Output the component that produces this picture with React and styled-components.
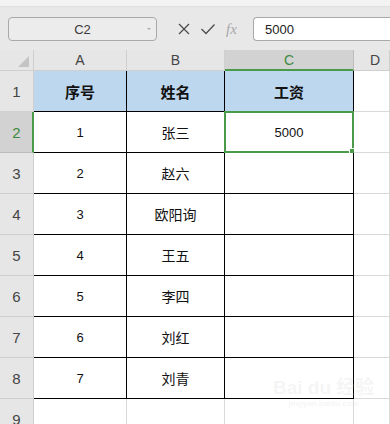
import React from "react";
import styled, { createGlobalStyle } from "styled-components";

const Global = createGlobalStyle`
  html, body { margin: 0; padding: 0; background: #ffffff; }
  body { font-family: "Liberation Sans", "Noto Sans CJK SC", sans-serif; overflow: hidden; }
  * { box-sizing: border-box; }
`;

const Page = styled.div`
  width: 390px;
  height: 424px;
  overflow: hidden;
  position: relative;
  background: #fff;
`;

const TopStrip = styled.div`
  height: 7px;
  background: #f3f3f3;
  border-bottom: 1px solid #e0e0e0;
`;

const FormulaBar = styled.div`
  height: 43px;
  background: #e8e8e8;
  display: flex;
  align-items: flex-start;
  padding: 10px 0 0 8px;
`;

const NameBox = styled.div`
  width: 149px;
  height: 24px;
  border: 1px solid #a9a9a9;
  border-radius: 4px;
  background: #ececec;
  display: flex;
  align-items: center;
  justify-content: center;
  position: relative;
  font-size: 13px;
  color: #3a3a3a;
`;

const Caret = styled.span`
  position: absolute;
  right: 5px;
  top: 10px;
  width: 0;
  height: 0;
  border-left: 2px solid transparent;
  border-right: 2px solid transparent;
  border-top: 2px solid #aaa;
`;

const Icons = styled.div`
  display: flex;
  align-items: center;
  height: 24px;
  gap: 9px;
  padding-left: 20px;
  width: 96px;
`;

const Fx = styled.span`
  font-family: "Liberation Serif", serif;
  font-style: italic;
  font-size: 15px;
  color: #a8a8a8;
  margin-left: 1px;
`;

const FormulaInput = styled.div`
  flex: 1;
  height: 24px;
  border: 1px solid #a9a9a9;
  border-right: none;
  border-radius: 4px 0 0 4px;
  background: #fff;
  display: flex;
  align-items: center;
  padding-left: 11px;
  font-size: 13px;
  color: #222;
`;

const Grid = styled.div`
  display: grid;
  grid-template-columns: 34px 93px 98px 129px 1fr;
  grid-template-rows: 21px repeat(9, 41px);
`;

const Corner = styled.div`
  background: #e6e6e6;
  border-right: 1px solid #cfcfcf;
  border-bottom: 1px solid #cfcfcf;
  position: relative;
`;

const Tri = styled.span`
  position: absolute;
  right: 4px;
  bottom: 3px;
  width: 0;
  height: 0;
  border-left: 11px solid transparent;
  border-bottom: 11px solid #c4c4c4;
`;

const ColHead = styled.div`
  background: ${(p) => (p.$sel ? "#d2d2d2" : "#e6e6e6")};
  color: ${(p) => (p.$sel ? "#3e8a3e" : "#444")};
  border-right: 1px solid ${(p) => (p.$sel ? "#bcbcbc" : "#cfcfcf")};
  border-bottom: ${(p) => (p.$sel ? "2px solid #4a9a4a" : "1px solid #cfcfcf")};
  display: flex;
  align-items: center;
  justify-content: ${(p) => (p.$left ? "flex-start" : "center")};
  padding-left: ${(p) => (p.$left ? "16px" : "0")};
  font-size: 14px;
`;

const RowHead = styled.div`
  background: ${(p) => (p.$sel ? "#d2d2d2" : "#e6e6e6")};
  color: ${(p) => (p.$sel ? "#3e8a3e" : "#444")};
  border-right: ${(p) => (p.$sel ? "2px solid #4a9a4a" : "1px solid #cfcfcf")};
  border-bottom: 1px solid ${(p) => (p.$sel ? "#bcbcbc" : "#cfcfcf")};
  display: flex;
  align-items: center;
  justify-content: center;
  font-size: 15px;
  padding-left: ${(p) => (p.$sel ? "1px" : "0")};
`;

const Cell = styled.div`
  position: relative;
  background: ${(p) => (p.$head ? "#bdd7ee" : "#fff")};
  border-right: 1px solid ${(p) => (p.$table ? "#000" : "#d9d9d9")};
  border-bottom: 1px solid ${(p) => (p.$table ? "#000" : "#d9d9d9")};
  display: flex;
  align-items: center;
  justify-content: center;
  font-family: ${(p) =>
    p.$head ? '"Noto Sans CJK SC", sans-serif' : '"Liberation Sans", "Noto Sans CJK SC", sans-serif'};
  font-weight: ${(p) => (p.$head ? 700 : 400)};
  font-size: ${(p) => (p.$head ? "15px" : "13px")};
  color: #111;
`;

const CnText = styled.span`
  font-family: "Noto Sans CJK SC", sans-serif;
  font-size: 14px;
`;

const Selection = styled.div`
  position: absolute;
  left: -1px;
  top: -1px;
  right: -1px;
  bottom: -1px;
  border: 2px solid #4a9a4a;
  pointer-events: none;
`;

const Handle = styled.span`
  position: absolute;
  right: -4px;
  bottom: -4px;
  width: 5px;
  height: 5px;
  background: #4a9a4a;
  border: 1px solid #fff;
  box-sizing: content-box;
`;

const Watermark = styled.div`
  position: absolute;
  left: 273px;
  top: 372px;
  color: rgba(205, 205, 205, 0.2);
  font-family: "Liberation Sans", "Noto Sans CJK SC", sans-serif;
  display: flex;
  flex-direction: column;
  align-items: center;
  pointer-events: none;
`;

const WmTop = styled.span`
  font-size: 19px;
  font-weight: 700;
`;

const WmBottom = styled.span`
  font-size: 8px;
  font-weight: 700;
`;

const XIcon = () => (
  <svg width="14" height="14" viewBox="0 0 14 14">
    <path d="M2 2 L12 12 M12 2 L2 12" stroke="#4d4d4d" strokeWidth="1.3" fill="none" />
  </svg>
);

const CheckIcon = () => (
  <svg width="16" height="14" viewBox="0 0 16 14">
    <path d="M1.5 7 L6 11.5 L14.5 2.5" stroke="#4d4d4d" strokeWidth="1.3" fill="none" />
  </svg>
);

const rows = [
  ["序号", "姓名", "工资"],
  ["1", "张三", "5000"],
  ["2", "赵六", ""],
  ["3", "欧阳询", ""],
  ["4", "王五", ""],
  ["5", "李四", ""],
  ["6", "刘红", ""],
  ["7", "刘青", ""],
];

export default function App() {
  return (
    <Page>
      <Global />
      <TopStrip />
      <FormulaBar>
        <NameBox>
          C2
          <Caret />
        </NameBox>
        <Icons>
          <XIcon />
          <CheckIcon />
          <Fx>fx</Fx>
        </Icons>
        <FormulaInput>5000</FormulaInput>
      </FormulaBar>
      <Grid>
        <Corner>
          <Tri />
        </Corner>
        <ColHead>A</ColHead>
        <ColHead>B</ColHead>
        <ColHead $sel>C</ColHead>
        <ColHead $left>D</ColHead>
        {rows.map((r, i) => (
          <React.Fragment key={i}>
            <RowHead $sel={i === 1}>{i + 1}</RowHead>
            {r.map((v, j) => (
              <Cell key={j} $table $head={i === 0}>
                {i > 0 && j === 1 ? <CnText>{v}</CnText> : v}
                {i === 1 && j === 2 && (
                  <Selection>
                    <Handle />
                  </Selection>
                )}
              </Cell>
            ))}
            <Cell />
          </React.Fragment>
        ))}
        <RowHead>9</RowHead>
        <Cell />
        <Cell />
        <Cell />
        <Cell />
      </Grid>
      <Watermark>
        <WmTop>Bai du 经验</WmTop>
        <WmBottom>jingyan.baidu.com</WmBottom>
      </Watermark>
    </Page>
  );
}
